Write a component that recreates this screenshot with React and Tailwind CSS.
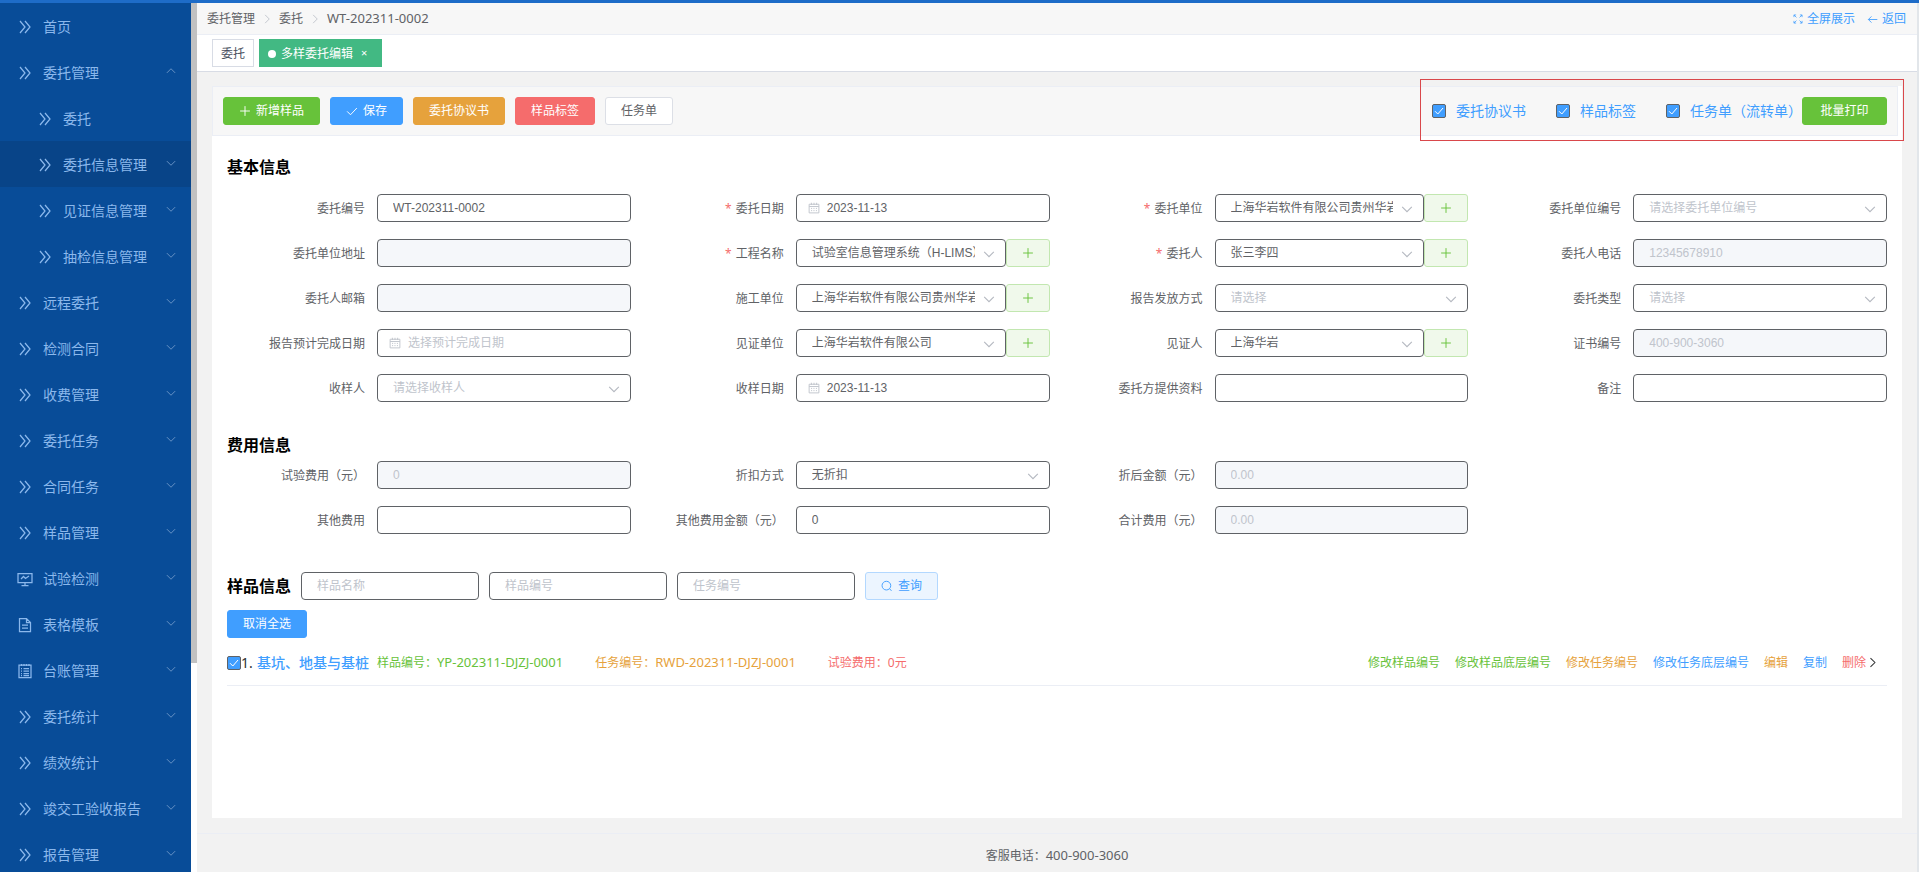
import React, { useState } from 'react';

const ICONS = {
  dArrow: 'M3 2l5 6-5 6M8 2l5 6-5 6',
  monitor: 'M1 2.5h14v9H1zM8 11.5v3M4.5 14.5h7M4 8l2.5-2.5 2 2L12 5',
  document: 'M2.5 1.5h7l4 4v9h-11zM9.5 1.5v4h4M5 8h6M5 11h6',
  notebook: 'M2 2h12v12.5H2zM4.5 1v2M7 1v2M9.5 1v2M12 1v2M4 5.5h1M6.5 5.5H12M4 8h1M6.5 8H12M4 10.5h1M6.5 10.5H12M4 12.7h1M6.5 12.7H12',
  down: 'M2.5 5.5L8 11l5.5-5.5',
  up: 'M2.5 10.5L8 5l5.5 5.5',
  right: 'M5.5 2.5L11 8l-5.5 5.5',
  plus: 'M8 1.5v13M1.5 8h13',
  check: 'M1.5 8.5L6 13l8.5-9',
  back: 'M15 8H2M6.5 3.5L2 8l4.5 4.5',
  search: 'M13 7.5a5.8 5.8 0 1 1-11.6 0a5.8 5.8 0 0 1 11.6 0zM11.5 11.7L14 14.5',
  calendar: 'M1.5 3h13v11.5h-13zM1.5 6h13M4.5 1v3M8 1v3M11.5 1v3M4 8.5h1.5M7.2 8.5h1.5M10.5 8.5H12M4 11.5h1.5M7.2 11.5h1.5M10.5 11.5H12',
  full: 'M1.500 5V1.500H5M1.500 1.500l4 4M11 1.500h3.500V5M14.500 1.500l-4 4M1.500 11v3.500H5M1.500 14.500l4-4M14.500 11v3.500H11M14.500 14.500l-4-4',
};

const Icon = ({ name, className }) => (
  <svg viewBox="0 0 16 16" fill="none" stroke="currentColor" strokeWidth="1.25" className={`shrink-0 ${className}`}>
    <path d={ICONS[name]} />
  </svg>
);

const menu = [
  { name: '首页', icon: 'dArrow' },
  { name: '委托管理', icon: 'dArrow', arrow: 'up' },
  { name: '委托', icon: 'dArrow', sub: true },
  { name: '委托信息管理', icon: 'dArrow', sub: true, arrow: 'down', active: true },
  { name: '见证信息管理', icon: 'dArrow', sub: true, arrow: 'down' },
  { name: '抽检信息管理', icon: 'dArrow', sub: true, arrow: 'down' },
  { name: '远程委托', icon: 'dArrow', arrow: 'down' },
  { name: '检测合同', icon: 'dArrow', arrow: 'down' },
  { name: '收费管理', icon: 'dArrow', arrow: 'down' },
  { name: '委托任务', icon: 'dArrow', arrow: 'down' },
  { name: '合同任务', icon: 'dArrow', arrow: 'down' },
  { name: '样品管理', icon: 'dArrow', arrow: 'down' },
  { name: '试验检测', icon: 'monitor', arrow: 'down' },
  { name: '表格模板', icon: 'document', arrow: 'down' },
  { name: '台账管理', icon: 'notebook', arrow: 'down' },
  { name: '委托统计', icon: 'dArrow', arrow: 'down' },
  { name: '绩效统计', icon: 'dArrow', arrow: 'down' },
  { name: '竣交工验收报告', icon: 'dArrow', arrow: 'down' },
  { name: '报告管理', icon: 'dArrow', arrow: 'down' },
];

const baseFields = [
  { id: 'code', label: '委托编号', value: 'WT-202311-0002' },
  { id: 'date', label: '委托日期', type: 'date', value: '2023-11-13', required: true },
  { id: 'unit', label: '委托单位', type: 'select', value: '上海华岩软件有限公司贵州华岩分公司', required: true, add: true },
  { id: 'unitCode', label: '委托单位编号', type: 'select', placeholder: '请选择委托单位编号' },
  { id: 'address', label: '委托单位地址', disabled: true },
  { id: 'project', label: '工程名称', type: 'select', value: '试验室信息管理系统（H-LIMS）', required: true, add: true },
  { id: 'client', label: '委托人', type: 'select', value: '张三李四', required: true, add: true },
  { id: 'phone', label: '委托人电话', value: '12345678910', disabled: true },
  { id: 'email', label: '委托人邮箱', disabled: true },
  { id: 'builder', label: '施工单位', type: 'select', value: '上海华岩软件有限公司贵州华岩分公司', add: true },
  { id: 'delivery', label: '报告发放方式', type: 'select', placeholder: '请选择' },
  { id: 'kind', label: '委托类型', type: 'select', placeholder: '请选择' },
  { id: 'finish', label: '报告预计完成日期', type: 'date', placeholder: '选择预计完成日期' },
  { id: 'witnessUnit', label: '见证单位', type: 'select', value: '上海华岩软件有限公司', add: true },
  { id: 'witness', label: '见证人', type: 'select', value: '上海华岩', add: true },
  { id: 'cert', label: '证书编号', value: '400-900-3060', disabled: true },
  { id: 'receiver', label: '收样人', type: 'select', placeholder: '请选择收样人' },
  { id: 'receiveDate', label: '收样日期', type: 'date', value: '2023-11-13' },
  { id: 'material', label: '委托方提供资料' },
  { id: 'remark', label: '备注' },
];

const feeFields = [
  { id: 'testFee', label: '试验费用（元）', value: '0', disabled: true },
  { id: 'discount', label: '折扣方式', type: 'select', value: '无折扣' },
  { id: 'afterFee', label: '折后金额（元）', value: '0.00', disabled: true },
  { id: 'otherFee', label: '其他费用' },
  { id: 'otherAmount', label: '其他费用金额（元）', value: '0' },
  { id: 'total', label: '合计费用（元）', value: '0.00', disabled: true },
];

const actions = [
  { name: '修改样品编号', color: 'text-[#67c23a]' },
  { name: '修改样品底层编号', color: 'text-[#67c23a]' },
  { name: '修改任务编号', color: 'text-[#e6a23c]' },
  { name: '修改任务底层编号', color: 'text-[#409eff]' },
  { name: '编辑', color: 'text-[#e6a23c]' },
  { name: '复制', color: 'text-[#409eff]' },
  { name: '删除', color: 'text-[#f56c6c]' },
];

const BOX = 'h-7 w-full min-w-0 rounded border border-[#5f6266] font-[Liberation_Sans,Noto_Sans_CJK_SC,sans-serif] text-xs outline-none placeholder:text-[#c0c4cc]';

const Button = ({ icon, className, children }) => (
  <button className={`flex h-7 shrink-0 items-center justify-center gap-[5px] rounded-[3px] border px-[15px] text-xs ${className}`}>
    {icon && <Icon name={icon} className="size-3" />}
    {children}
  </button>
);

const Control = ({ field }) => {
  if (field.type === 'select') {
    return (
      <div className="relative min-w-0 flex-1">
        <select
          id={field.id}
          className={`${BOX} appearance-none bg-white pl-[15px] pr-[30px] ${field.value ? 'text-[#606266]' : 'text-[#c0c4cc]'}`}
        >
          <option>{field.value || field.placeholder}</option>
        </select>
        <Icon name="down" className="pointer-events-none absolute right-[10px] top-2 size-[14px] text-[#b4b8c0]" />
      </div>
    );
  }
  return (
    <div className="relative min-w-0 flex-1">
      {field.type === 'date' && (
        <Icon name="calendar" className="absolute left-3 top-2 size-3 text-[#c0c4cc]" />
      )}
      <input
        id={field.id}
        type="text"
        defaultValue={field.value}
        placeholder={field.placeholder}
        disabled={field.disabled}
        className={`${BOX} pr-[15px] ${field.type === 'date' ? 'pl-[30px]' : 'pl-[15px]'} ${field.disabled ? 'bg-[#f5f7fa] text-[#c0c4cc]' : 'bg-white text-[#606266]'}`}
      />
    </div>
  );
};

const FormItem = ({ field }) => (
  <div className="flex min-w-0 items-center">
    <label htmlFor={field.id} className="w-[150px] shrink-0 pr-3 pt-px text-right text-xs text-[#606266]">
      {field.required && <span className="mr-1 text-[#f56c6c]">*</span>}
      {field.label}
    </label>
    <Control field={field} />
    {field.add && (
      <button
        aria-label={`新增${field.label}`}
        className="flex h-7 w-11 shrink-0 items-center justify-center rounded-[3px] border border-[#c2e7b0] bg-[#f0f9eb] text-[#67c23a]"
      >
        <Icon name="plus" className="size-3" />
      </button>
    )}
  </div>
);

const CheckBox = (props) => (
  <span className="relative flex size-[14px] shrink-0">
    <input
      type="checkbox"
      className="size-[14px] appearance-none rounded-xs border border-[#5f6266] bg-white checked:bg-[#409eff]"
      {...props}
    />
    <svg viewBox="0 0 14 14" fill="none" stroke="white" className="pointer-events-none absolute inset-0">
      <path d="M3 7.200L5.800 10L11 4" />
    </svg>
  </span>
);

const Sidebar = () => (
  <aside className="flex shrink-0">
    <nav className="w-[191px] overflow-hidden bg-[#084c98]">
      {menu.map((item) => (
        <a
          key={item.name}
          href="#"
          className={`flex h-[46px] items-center pr-[14px] pt-[2px] text-sm text-[#8bb8ec] ${item.sub ? 'pl-[37px]' : 'pl-[17px]'} ${item.active ? 'bg-[#084488]' : ''}`}
        >
          <Icon name={item.icon} className="mr-[10px] size-4" />
          <span className="flex-1">{item.name}</span>
          {item.arrow && <Icon name={item.arrow} className="mb-1 size-3 text-[#6c95c6]" />}
        </a>
      ))}
    </nav>
    <div className="w-[6px] bg-white">
      <div className="h-[76%] bg-[#c1c1c1]" />
    </div>
  </aside>
);

const Header = () => (
  <header className="flex h-8 items-center justify-between border-b border-[#ebeef5] bg-[#f7f7f7] pl-[10px] pr-[11px] pt-px text-xs text-[#606266]">
    <div className="flex items-center gap-[6px]">
      <a href="#">委托管理</a>
      <Icon name="right" className="size-3 text-[#c0c4cc]" />
      <a href="#">委托</a>
      <Icon name="right" className="size-3 text-[#c0c4cc]" />
      <span className="text-[13px]">WT-202311-0002</span>
    </div>
    <div className="flex items-center gap-3 text-[#409eff]">
      <a href="#" className="flex items-center gap-1">
        <Icon name="full" className="size-[10px]" />
        全屏展示
      </a>
      <a href="#" className="flex items-center gap-1">
        <Icon name="back" className="size-[11px]" />
        返回
      </a>
    </div>
  </header>
);

const TagsView = () => (
  <div className="flex h-[37px] shrink-0 items-center gap-[5px] border-b border-[#d8dce5] bg-white px-[15px] text-xs">
    <a href="#" className="flex h-7 items-center border border-[#d8dce5] px-2 pt-px text-[#495060]">委托</a>
    <a href="#" className="flex h-7 items-center bg-[#42b983] px-[9px] pt-px text-white">
      <span className="mr-[5px] size-2 rounded-full bg-white" />
      多样委托编辑
      <span className="ml-2 w-3 text-[11px]">×</span>
    </a>
  </div>
);

const Toolbar = () => {
  const [prints, setPrints] = useState({ 委托协议书: true, 样品标签: true, '任务单（流转单）': true });

  return (
    <div className="relative mr-1 flex items-center justify-between border border-[#ebeef5] bg-[#f7f7f7] p-[10px]">
      <div className="flex gap-[10px]">
        <Button icon="plus" className="border-[#67c23a] bg-[#67c23a] text-white">新增样品</Button>
        <Button icon="check" className="border-[#409eff] bg-[#409eff] text-white">保存</Button>
        <Button className="border-[#e6a23c] bg-[#e6a23c] text-white">委托协议书</Button>
        <Button className="border-[#f56c6c] bg-[#f56c6c] text-white">样品标签</Button>
        <Button className="border-[#dcdfe6] bg-white text-[#606266]">任务单</Button>
      </div>
      <div className="flex items-center">
        <div className="flex items-center gap-[30px]">
          {Object.keys(prints).map((name) => (
            <label key={name} className="flex items-center gap-[10px] text-sm text-[#409eff]">
              <CheckBox
                checked={prints[name]}
                onChange={(e) => setPrints({ ...prints, [name]: e.target.checked })}
              />
              {name}
            </label>
          ))}
        </div>
        <Button className="w-[85px] border-[#67c23a] bg-[#67c23a] text-white">批量打印</Button>
      </div>
      {/* highlight frame around the batch print area */}
      <div className="pointer-events-none absolute -bottom-[6px] -right-[7px] -top-2 w-[484px] border border-[#d9484b]" />
    </div>
  );
};

const Samples = () => (
  <section>
    <div className="flex items-center gap-[10px]">
      <h2 className="text-base font-bold leading-6 text-black">样品信息</h2>
      {['样品名称', '样品编号', '任务编号'].map((name) => (
        <div key={name} className="w-[178px]">
          <input type="text" aria-label={name} placeholder={name} className={`${BOX} bg-white px-[15px]`} />
        </div>
      ))}
      <Button icon="search" className="border-[#b3d8ff] bg-[#ecf5ff] text-[#409eff]">查询</Button>
    </div>
    <div className="flex py-[10px]">
      <Button className="border-[#409eff] bg-[#409eff] text-white">取消全选</Button>
    </div>
    <div className="flex h-[38px] items-center justify-between border-b border-[#ebeef5] pb-2 text-xs">
      <div className="flex items-center">
        <label className="flex items-center text-sm text-[#303133]">
          <CheckBox defaultChecked />
          <span className="w-4">1.</span>
          <span className="font-medium text-[#409eff]">基坑、地基与基桩</span>
        </label>
        <span className="ml-2 mr-8 text-[#67c23a]">样品编号：<span className="text-[13px]">YP-202311-DJZJ-0001</span></span>
        <span className="mr-8 text-[#e6a23c]">任务编号：<span className="text-[13px]">RWD-202311-DJZJ-0001</span></span>
        <span className="text-[#f56c6c]">试验费用：0元</span>
      </div>
      <div className="flex items-center gap-[15px] pr-2">
        {actions.map((action) => (
          <a key={action.name} href="#" className={`flex items-center ${action.color}`}>
            {action.name}
            {action.name === '删除' && <Icon name="right" className="size-[13px] text-[#303133]" />}
          </a>
        ))}
      </div>
    </div>
  </section>
);

const App = () => (
  <div className="flex h-screen flex-col border-t-[3px] border-[#1e6cc8] bg-[#f2f2f2] font-[Noto_Sans,Noto_Sans_CJK_SC,sans-serif]">
    <div className="flex min-h-0 flex-1">
      <Sidebar />
      <div className="flex min-w-0 flex-1 flex-col overflow-y-auto border-r-2 border-[#e2e6ea]">
        <Header />
        <TagsView />
        <main className="flex flex-1 flex-col px-[15px] pt-[14px]">
          <div className="flex-1 bg-white">
            <Toolbar />
            <div className="px-[15px] pt-[19px]">
              <section>
                <h2 className="text-base font-bold leading-6 text-black">基本信息</h2>
                <div className="mt-[15px] grid grid-cols-4 gap-x-[15px] gap-y-[17px]">
                  {baseFields.map((field) => <FormItem key={field.id} field={field} />)}
                </div>
              </section>
              <section className="pb-[38px] pt-[31px]">
                <h2 className="text-base font-bold leading-6 text-black">费用信息</h2>
                <div className="mt-1 grid grid-cols-4 gap-x-[15px] gap-y-[17px]">
                  {feeFields.map((field, i) => (
                    <React.Fragment key={field.id}>
                      <FormItem field={field} />
                      {i === 2 && <div />}
                    </React.Fragment>
                  ))}
                </div>
              </section>
              <Samples />
            </div>
          </div>
        </main>
        <footer className="mt-[15px] border-t border-[#ebeef5] pb-[7px] pt-3 text-center text-xs leading-[18px] text-[#606266]">
          客服电话：<span className="text-[13px]">400-900-3060</span>
        </footer>
      </div>
    </div>
  </div>
);

export default App;
